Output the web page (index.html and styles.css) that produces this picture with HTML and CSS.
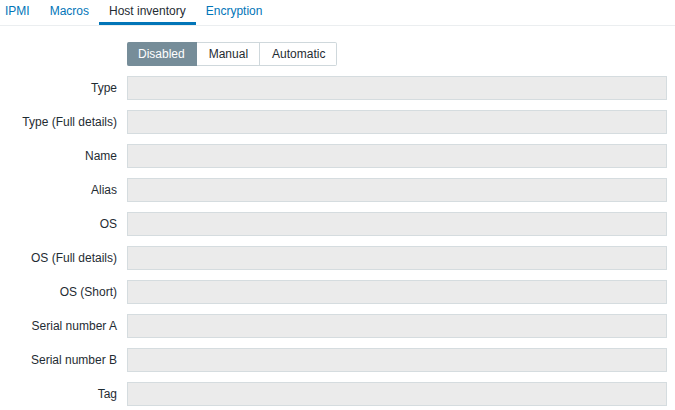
FILE: index.html
```html
<!DOCTYPE html>
<html>
<head>
<meta charset="utf-8">
<link rel="stylesheet" href="styles.css">
</head>
<body>
<ul class="tabs">
  <li class="tab"><a href="#">IPMI</a></li>
  <li class="tab"><a href="#">Macros</a></li>
  <li class="tab active"><a href="#">Host inventory</a></li>
  <li class="tab"><a href="#">Encryption</a></li>
</ul>
<div class="form">
  <div class="row mode-row">
    <div class="label"></div>
    <div class="radio">
      <span class="seg on">Disabled</span><span class="seg">Manual</span><span class="seg">Automatic</span>
    </div>
  </div>
  <div class="row"><div class="label">Type</div><div class="field"></div></div>
  <div class="row"><div class="label">Type (Full details)</div><div class="field"></div></div>
  <div class="row"><div class="label">Name</div><div class="field"></div></div>
  <div class="row"><div class="label">Alias</div><div class="field"></div></div>
  <div class="row"><div class="label">OS</div><div class="field"></div></div>
  <div class="row"><div class="label">OS (Full details)</div><div class="field"></div></div>
  <div class="row"><div class="label">OS (Short)</div><div class="field"></div></div>
  <div class="row"><div class="label">Serial number A</div><div class="field"></div></div>
  <div class="row"><div class="label">Serial number B</div><div class="field"></div></div>
  <div class="row"><div class="label">Tag</div><div class="field"></div></div>
</div>
</body>
</html>
```
FILE: styles.css
```css
html, body {
  margin: 0;
  padding: 0;
  background: #ffffff;
  font-family: "Liberation Sans", Arial, sans-serif;
  font-size: 12px;
  color: #1f2c33;
}
.tabs {
  list-style: none;
  margin: 0 0 0 -5px;
  padding: 0;
  display: flex;
  border-bottom: 1px solid #ebeef0;
  height: 25px;
}
.tab {
  padding: 0 10px;
  height: 25px;
  box-sizing: border-box;
  line-height: 22px;
}
.tab a {
  color: #0275b8;
  text-decoration: none;
}
.tab.active {
  border-bottom: 3px solid #0275b8;
}
.tab.active a {
  color: #1f2c33;
}
.form {
  padding-top: 16px;
  display: flex;
  flex-direction: column;
  gap: 10px;
}
.row {
  display: flex;
  align-items: center;
  gap: 10px;
}
.label {
  width: 117px;
  flex: none;
  text-align: right;
  line-height: 24px;
}
.radio {
  display: flex;
}
.seg {
  height: 24px;
  box-sizing: border-box;
  line-height: 22px;
  padding: 0 11px 0 12px;
  border: 1px solid #cfd8dc;
  border-left: none;
  background: #fff;
  color: #1f2c33;
}
.seg.on {
  padding: 0 11px;
  background: #768d99;
  border-color: #768d99;
  color: #fff;
  border-radius: 2px 0 0 2px;
}
.seg:last-child {
  border-radius: 0 2px 2px 0;
}
.field {
  width: 540px;
  height: 24px;
  box-sizing: border-box;
  background: #ebebeb;
  border: 1px solid #d5dcdf;
}
```
